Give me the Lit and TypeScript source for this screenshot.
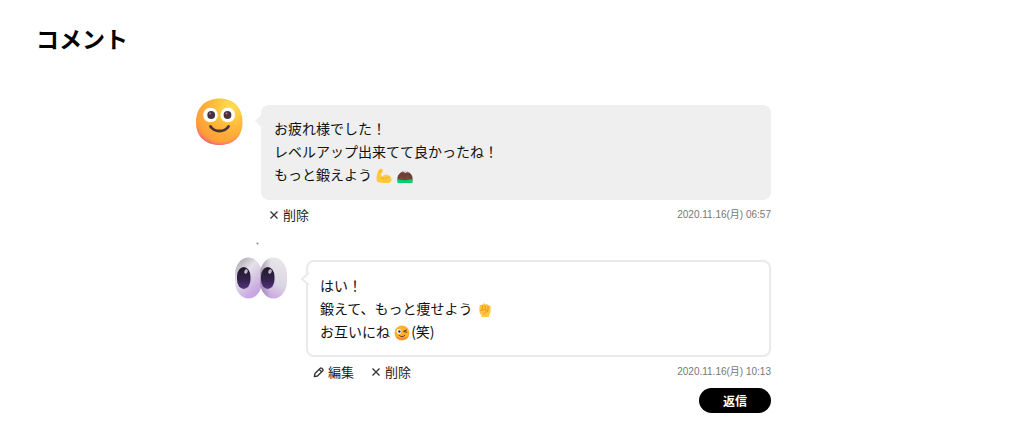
import { LitElement, css, html, svg, nothing } from "lit";
import { customElement, property } from "lit/decorators.js";

const faceAvatar = svg`
  <svg class="avatar face" viewBox="0 0 48 48" role="img" aria-label="笑顔">
    <defs>
      <radialGradient id="skin" cx="0.75" cy="0.2" r="0.9">
        <stop offset="0" stop-color="#ffe052" />
        <stop offset="0.45" stop-color="#ffba3a" />
        <stop offset="0.85" stop-color="#fda038" />
        <stop offset="1" stop-color="#f58a3c" />
      </radialGradient>
      <radialGradient id="blush" cx="0.53" cy="0.4" r="0.62">
        <stop offset="0.86" stop-color="#f8639a" stop-opacity="0" />
        <stop offset="1" stop-color="#f0509a" stop-opacity="0.8" />
      </radialGradient>
    </defs>
    <path d="M24.500 .5C38.500 .5 47.500 9.500 47.500 24S38.500 47 24.500 47 1 38.500 1 24 10.500 .5 24.500 .5Z" fill="url(#skin)" />
    <path d="M24.500 .5C38.500 .5 47.500 9.500 47.500 24S38.500 47 24.500 47 1 38.500 1 24 10.500 .5 24.500 .5Z" fill="url(#blush)" />
    <circle cx="15.500" cy="17" r="7.300" fill="#fff" />
    <circle cx="32.800" cy="17" r="7.300" fill="#fff" />
    <circle cx="16.200" cy="17" r="3.900" fill="#493143" />
    <circle cx="32.500" cy="17" r="3.900" fill="#493143" />
    <circle cx="15" cy="15.500" r="1" fill="#988594" />
    <circle cx="31.500" cy="15.500" r="1" fill="#988594" />
    <path d="M15.500 28.500C19.500 34.500 29.500 34.500 33.500 28.500" fill="none" stroke="#50303e" stroke-width="2.800" stroke-linecap="round" />
  </svg>`;

const eyesAvatar = svg`
  <svg class="avatar eyes" viewBox="0 0 54 58" role="img" aria-label="目">
    <defs>
      <linearGradient id="ballLeft" x1="0" y1="0.2" x2="0.5" y2="1">
        <stop offset="0" stop-color="#b5b0b8" />
        <stop offset="0.35" stop-color="#e6e2e9" />
        <stop offset="0.7" stop-color="#d3c2e2" />
        <stop offset="1" stop-color="#c9a5e3" />
      </linearGradient>
      <linearGradient id="ballRight" x1="0.7" y1="0" x2="0.4" y2="1">
        <stop offset="0" stop-color="#e9e6eb" />
        <stop offset="0.6" stop-color="#dcd6e2" />
        <stop offset="1" stop-color="#c9a5e3" />
      </linearGradient>
      <linearGradient id="ballShade" x1="0" y1="0" x2="1" y2="0">
        <stop offset="0" stop-color="#7b7088" stop-opacity="0.6" />
        <stop offset="0.4" stop-color="#7b7088" stop-opacity="0" />
      </linearGradient>
      <linearGradient id="pupil" x1="0" y1="0" x2="0" y2="1">
        <stop offset="0" stop-color="#211b2a" />
        <stop offset="0.55" stop-color="#33214a" />
        <stop offset="1" stop-color="#54337b" />
      </linearGradient>
    </defs>
    <circle cx="23.500" cy="2.500" r="1" fill="#858585" />
    <rect x="1" y="16.500" width="27" height="41" rx="13.500" ry="17" fill="url(#ballLeft)" />
    <rect x="26" y="16.500" width="27" height="41" rx="13.500" ry="17" fill="url(#ballRight)" />
    <rect x="26" y="16.500" width="27" height="41" rx="13.500" ry="17" fill="url(#ballShade)" />
    <rect x="3" y="26" width="13.500" height="22" rx="6.750" ry="9.500" fill="url(#pupil)" />
    <rect x="27" y="26" width="13.500" height="22" rx="6.750" ry="9.500" fill="url(#pupil)" />
    <ellipse cx="12" cy="30.500" rx="1.700" ry="2.400" fill="#bdb6c8" transform="rotate(20 12 30.500)" />
    <ellipse cx="36" cy="30.500" rx="1.700" ry="2.400" fill="#bdb6c8" transform="rotate(20 36 30.500)" />
  </svg>`;

const muscle = svg`
  <svg class="emoji" viewBox="0 0 16 16" role="img" aria-label="力こぶ">
    <path d="M3.200 1.200C4.600.3 6.800.8 7 2.200c.2 1.300-.7 2.200-1.800 2.300-.3 1.500-.2 3.200.3 4.600 1.300-1.800 3.500-2.800 5.700-2.300 2.900.6 4.600 3 4.300 5.400-.3 2.100-2.300 2.900-5.200 2.900-3.700 0-7.300-.4-8.900-1.700C-.2 12 .4 5.600 3.200 1.200Z" fill="#ffc83d" />
    <path d="M5.400 9.200c.5 1 1.400 1.700 2.500 1.800M9.500 11.200c.4-1.300 1.500-2 2.800-1.900M3.800 3.900l1.600.6" fill="none" stroke="#e89b25" stroke-width=".8" stroke-linecap="round" />
  </svg>`;

const mountain = svg`
  <svg class="emoji" viewBox="0 0 16 16" role="img" aria-label="山">
    <path d="M.5 13V9.500C1 6 4.500 3 8 3S15 6 15.500 9.500V13Z" fill="#6d4038" />
    <path d="M5 4.200 7.500 2.500 10 3 12.500 4.600 10 4.300 8.500 5 7 4.200Z" fill="#d9d6d8" />
    <path d="M2 10.500 5 7l2 4 3-4 4 4-4 1.500Z" fill="#7b453a" />
    <path d="M.5 11 4 11.800l4 .5 4-.5 3.500-.8V15H.5Z" fill="#00d26a" />
  </svg>`;

const fist = svg`
  <svg class="emoji" viewBox="0 0 16 16" role="img" aria-label="こぶし">
    <path d="M2.500 4.200c0-1.500 1.900-2 2.700-.9C5.300 1.300 7.800 1 8.200 2.700c.7-1.400 2.900-.8 2.800.8 1.100-.8 2.800-.1 2.700 1.500L13.500 10c-.2 1.700-.8 2.300-1.500 3v2H4.500v-2C3 12 2.300 10.500 2.300 8.500Z" fill="#ffc83d" />
    <path d="M5.300 3.500v4M8.200 3.500v4M11 4v3.500M3.500 8.500c2.500-1 5-.9 7.500-.1.500 1.100-.5 1.600-2.500 1.700-1 .6-1.500 1.400-1.700 2.200" fill="none" stroke="#e48c20" stroke-width=".9" stroke-linecap="round" />
  </svg>`;

const wink = svg`
  <svg class="emoji" viewBox="0 0 16 16" role="img" aria-label="ウインク">
    <circle cx="8" cy="8" r="7.500" fill="#ffb12e" />
    <path d="M1.500 11.300a7.500 7.500 0 0 0 13 0C11 13 5 13 1.500 11.300Z" fill="#f98d32" />
    <circle cx="5" cy="6.500" r="2.400" fill="#fff" />
    <circle cx="5.400" cy="6.500" r="1.200" fill="#402a32" />
    <path d="M9.800 6.200 12.500 5M10 6.600l2.700.6M5.500 10.600c1.500 1.500 4 1.400 5.300-.2" fill="none" stroke="#5c3728" stroke-width="1" stroke-linecap="round" />
  </svg>`;

const crossIcon = svg`
  <svg class="icon" viewBox="0 0 12 12" aria-hidden="true">
    <path d="M2.500 2.500l7 7M9.500 2.500l-7 7" />
  </svg>`;

const pencilIcon = svg`
  <svg class="icon" viewBox="0 0 12 12" aria-hidden="true">
    <path d="M1.300 10.700 2 7.500 7.300 2.200Q8 1.500 8.700 2.200L9.800 3.300Q10.500 4 9.800 4.700L4.500 10ZM6.200 3.400 8.600 5.800" />
  </svg>`;

@customElement("comment-item")
export class CommentItem extends LitElement {
  @property({ type: Boolean, reflect: true }) reply = false;
  @property() datetime = "";
  @property() date = "";
  @property({ attribute: false }) avatar: unknown = nothing;
  @property({ attribute: false }) lines: unknown[] = [];

  static styles = css`
    :host { display: block; }
    .comment { display: flex; align-items: flex-start; gap: 18px; }
    .avatar { display: block; flex: none; }
    .face { width: 48px; height: 48px; }
    .eyes { width: 54px; height: 58px; }
    .body { flex: 1; min-width: 0; padding-top: 7px; }
    .bubble {
      position: relative;
      padding: 12px 13px 14px;
      border-radius: 8px;
      background: #efefef;
      font-size: 14px;
      line-height: 23px;
      color: #111;
    }
    .bubble p { margin: 0; }
    .tail { position: absolute; top: 8px; left: -6px; width: 8px; height: 16px; }
    .tail path { fill: #efefef; }
    .emoji { width: 16px; height: 16px; margin: 0 1px; vertical-align: -4px; }
    .meta {
      display: flex;
      align-items: center;
      justify-content: space-between;
      height: 30px;
      padding-left: 7px;
    }
    .actions { display: flex; gap: 16px; }
    button { font-family: inherit; border: 0; cursor: pointer; }
    .action {
      display: flex;
      align-items: center;
      gap: 3px;
      padding: 0;
      background: none;
      font-size: 13px;
      line-height: 20px;
      color: #222;
    }
    .icon {
      width: 12px;
      height: 12px;
      fill: none;
      stroke: #333;
      stroke-width: 1.3;
      stroke-linejoin: round;
    }
    time {
      font-family: "Liberation Sans", "Noto Sans CJK JP", sans-serif;
      font-size: 10px;
      line-height: 16px;
      color: #777;
    }
    :host([reply]) .comment { padding-left: 39px; }
    :host([reply]) .body { padding-top: 19px; }
    :host([reply]) .bubble { padding: 12px; border: 2px solid #eaeaea; background: #fff; }
    :host([reply]) .tail { top: 9px; left: -7px; }
    :host([reply]) .tail path { fill: #fff; stroke: #eaeaea; stroke-width: 2; }
    .respond { display: flex; justify-content: flex-end; padding-top: 1px; }
    .respond button {
      width: 72px;
      height: 25px;
      padding: 0;
      border-radius: 13px;
      background: #000;
      color: #fff;
      font-size: 12px;
      font-weight: 700;
      line-height: 24px;
    }
  `;

  render() {
    return html`
      <article class="comment">
        ${this.avatar}
        <div class="body">
          <div class="bubble">
            <svg class="tail" viewBox="0 0 8 16" aria-hidden="true">
              <path d=${this.reply ? "M8 2 1 8 8 14" : "M8 0 0 8 8 16Z"} />
            </svg>
            ${this.lines.map((line) => html`<p>${line}</p>`)}
          </div>
          <div class="meta">
            <div class="actions">
              ${this.reply ? html`<button class="action" type="button">${pencilIcon}編集</button>` : nothing}
              <button class="action" type="button">${crossIcon}削除</button>
            </div>
            <time datetime=${this.datetime}>${this.date}</time>
          </div>
          ${this.reply ? html`<div class="respond"><button type="button">返信</button></div>` : nothing}
        </div>
      </article>
    `;
  }
}

@customElement("app-root")
export class AppRoot extends LitElement {
  static styles = css`
    :host {
      display: block;
      background: #fff;
      color: #000;
      font-family: "Noto Sans CJK JP", sans-serif;
    }
    .page { padding: 22px 94px 24px 36px; }
    h2 { margin: 0; font-size: 23px; line-height: 32px; font-weight: 700; }
    .thread {
      display: flex;
      flex-direction: column;
      gap: 11px;
      max-width: 576px;
      margin: 44px auto 0;
    }
  `;

  render() {
    return html`
      <main class="page">
        <h2>コメント</h2>
        <div class="thread">
          <comment-item
            datetime="2020-11-16T06:57"
            date="2020.11.16(月) 06:57"
            .avatar=${faceAvatar}
            .lines=${["お疲れ様でした！", "レベルアップ出来てて良かったね！", html`もっと鍛えよう${muscle}${mountain}`]}
          ></comment-item>
          <comment-item
            reply
            datetime="2020-11-16T10:13"
            date="2020.11.16(月) 10:13"
            .avatar=${eyesAvatar}
            .lines=${["はい！", html`鍛えて、もっと痩せよう${fist}`, html`お互いにね${wink}(笑)`]}
          ></comment-item>
        </div>
      </main>
    `;
  }
}
